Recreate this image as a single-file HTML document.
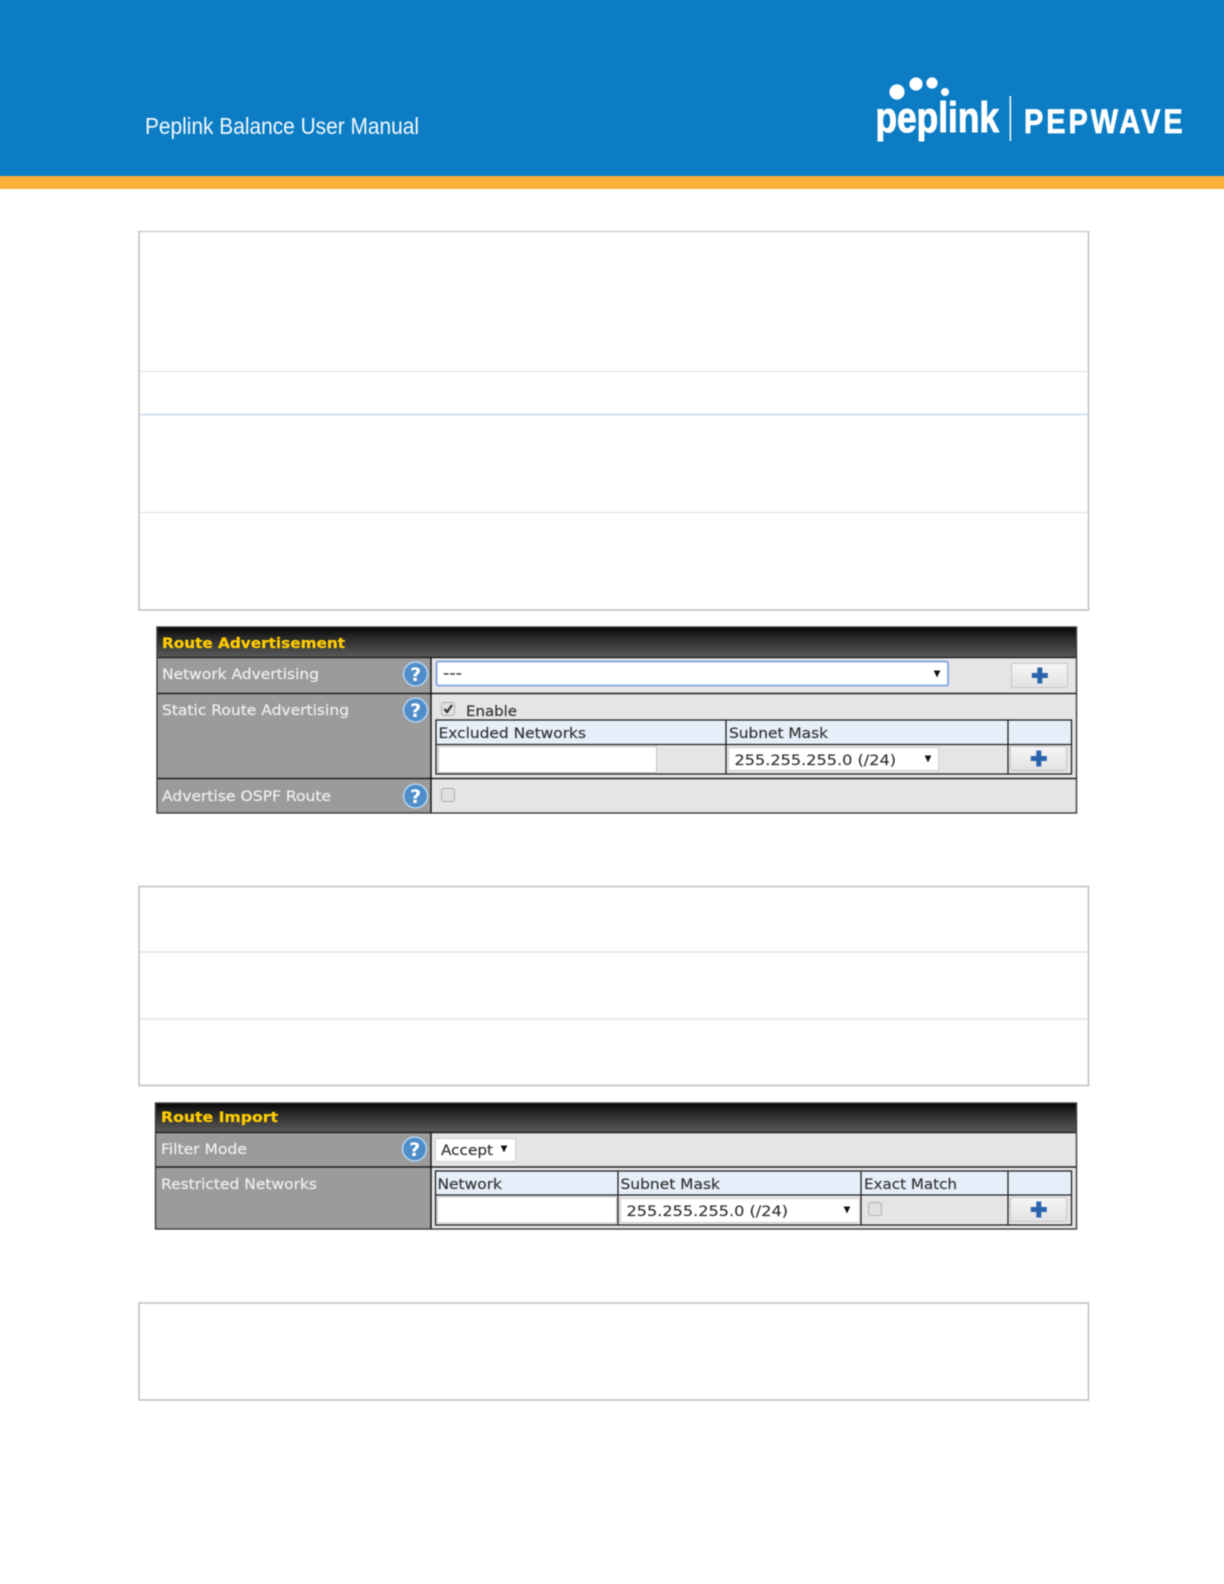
<!DOCTYPE html>
<html><head><meta charset="utf-8"><title>Peplink Balance User Manual</title>
<style>
html,body{margin:0;padding:0;background:#fff;width:1224px;height:1584px}
#w{position:relative;width:1224px;height:1584px;overflow:hidden;contain:paint}
svg{display:block;position:absolute;left:-10px;top:-10px;filter:blur(.45px)}
text{font-family:"DejaVu Sans","Liberation Sans",sans-serif;font-size:14px}
.l{fill:#eee;stroke:#eee;stroke-width:.2}
.d{fill:#333;stroke:#333;stroke-width:.15}
.t{fill:#fc0;font-weight:bold;stroke:#fc0;stroke-width:.25}
.q{fill:#fff;font-weight:bold;font-size:19px;text-anchor:middle}
</style></head><body><div id="w">
<svg width="1244" height="1604" viewBox="-10 -10 1244 1604" xmlns="http://www.w3.org/2000/svg">
<defs>
<linearGradient id="hg" x1="0" y1="0" x2="0" y2="1"><stop offset="0" stop-color="#050505"/><stop offset=".35" stop-color="#2a2a2a"/><stop offset="1" stop-color="#5e5e5e"/></linearGradient>
<pattern id="hatch" width="4" height="4" patternUnits="userSpaceOnUse"><path d="M0 4L4 0" stroke="#000" stroke-opacity=".14" stroke-width="1"/></pattern>
<linearGradient id="bg" x1="0" y1="0" x2="0" y2="1"><stop offset="0" stop-color="#f6f6f6"/><stop offset="1" stop-color="#e2e2e2"/></linearGradient>
<g id="plus"><rect x="0.5" y="0.5" width="56" height="24" rx="1.5" fill="url(#bg)" stroke="#c6c6c6"/><path d="M28.8 4.5v16M20.8 12.5h16" stroke="#2c64ab" stroke-width="5" fill="none"/></g>
<g id="help"><circle r="12" fill="#4f8dc9" stroke="#b0d2ef" stroke-width="1.6"/><text class="q" y="7">?</text></g>
<g id="cb"><rect x="0.5" y="0.5" width="13" height="13" rx="2.5" fill="#e0e0e0" stroke="#b0b0b0"/></g>
<path id="arr" d="M-3.3 -3H3.3L0 4Z" fill="#111"/>
</defs>

<!-- Banner -->
<rect x="-10" y="-10" width="1244" height="186" fill="#0c7dc4"/>
<rect x="-10" y="176" width="1244" height="13" fill="#fcaf38"/>
<text x="145" y="134" textLength="274" lengthAdjust="spacingAndGlyphs" style="font-family:'Liberation Sans',sans-serif;font-size:23px;fill:#f2f9fd">Peplink Balance User Manual</text>
<circle cx="897" cy="92" r="7.6" fill="#fff"/><circle cx="916" cy="84" r="6.6" fill="#fff"/><circle cx="932" cy="83" r="5.6" fill="#fff"/><circle cx="945" cy="92" r="4" fill="#fff"/>
<text x="875.5" y="132" textLength="123.5" lengthAdjust="spacingAndGlyphs" style="font-family:'Liberation Sans',sans-serif;font-weight:bold;font-size:43px;fill:#fff;stroke:#fff;stroke-width:1">peplink</text>
<rect x="1009.5" y="96" width="1.6" height="45" fill="#f0f7fc"/>
<text transform="translate(1024,133) scale(.85,1)" style="font-family:'Liberation Sans',sans-serif;font-weight:bold;font-size:34px;letter-spacing:3.5px;fill:#fff;stroke:#fff;stroke-width:.7">PEPWAVE</text>

<!-- Box 1 -->
<g fill="none">
<rect x="139" y="231.5" width="949.5" height="378.5" stroke="#bdbdbd" stroke-width="1.5"/>
<path d="M140 231.5H1088" stroke="#d8d8d8" stroke-width="1.6"/>
<path d="M140 371.5H1088M140 512.5H1088" stroke="#e4e4e4" stroke-width="1.2"/>
<path d="M140 414.5H1088" stroke="#ccd6ee" stroke-width="1.4"/>
<!-- Box 2 -->
<rect x="139" y="886.5" width="949.5" height="199" stroke="#bdbdbd" stroke-width="1.5"/>
<path d="M140 952H1088M140 1019H1088" stroke="#e4e4e4" stroke-width="1.4"/>
<!-- Box 3 -->
<rect x="139" y="1303" width="949.5" height="97" stroke="#bdbdbd" stroke-width="1.5"/>
</g>

<!-- Table 1 -->
<rect x="157" y="627" width="919.5" height="186" fill="#e5e5e8"/>
<rect x="157" y="658" width="274" height="155" fill="#9b9b9b"/>
<rect x="157" y="627" width="919.5" height="30" fill="url(#hg)"/>
<rect x="157" y="627" width="919.5" height="30" fill="url(#hatch)"/>
<path d="M157 657.5H1076M157 693.5H1076M157 778.5H1076" stroke="#222" stroke-width="1.4"/>
<path d="M431 657V813" stroke="#111" stroke-width="1.4"/>
<rect x="157" y="627" width="919.5" height="186" fill="none" stroke="#3c3c3c" stroke-width="1.4"/>
<text class="t" x="162" y="648" textLength="183" lengthAdjust="spacingAndGlyphs">Route Advertisement</text>
<text class="l" x="162" y="679" textLength="157" lengthAdjust="spacingAndGlyphs">Network Advertising</text>
<text class="l" x="162" y="715" textLength="187" lengthAdjust="spacingAndGlyphs">Static Route Advertising</text>
<text class="l" x="162" y="801" textLength="169" lengthAdjust="spacingAndGlyphs">Advertise OSPF Route</text>
<use href="#help" x="415.6" y="674"/><use href="#help" x="415.6" y="710"/><use href="#help" x="415.6" y="796"/>

<rect x="436.5" y="661.5" width="511.5" height="24" rx="1.5" fill="#fff" stroke="#7fa2e0" stroke-width="1.8"/>
<text class="d" x="443" y="678" textLength="19" lengthAdjust="spacingAndGlyphs">---</text>
<use href="#arr" x="937" y="673.5"/>
<use href="#plus" x="1011" y="663"/>

<use href="#cb" x="441" y="702"/>
<path d="M444.5 709l2.5 3 5-7" fill="none" stroke="#333" stroke-width="2.2"/>
<text class="d" x="466" y="716" textLength="51" lengthAdjust="spacingAndGlyphs">Enable</text>

<rect x="436" y="720" width="635.5" height="54" fill="#e5e5e8"/>
<rect x="436" y="720" width="635.5" height="24" fill="#e6eefa"/>
<rect x="436" y="720" width="635.5" height="54" fill="none" stroke="#222" stroke-width="1.3"/>
<path d="M436 744.5H1071M726 720V774M1008 720V774" stroke="#222" stroke-width="1.3"/>
<text class="d" x="438.5" y="738" textLength="147.5" lengthAdjust="spacingAndGlyphs">Excluded Networks</text>
<text class="d" x="729" y="738" textLength="99" lengthAdjust="spacingAndGlyphs">Subnet Mask</text>
<rect x="438.5" y="746.5" width="218" height="26" fill="#fff" stroke="#c4c4c4"/>
<rect x="728.5" y="747.5" width="210" height="23" rx="1" fill="#fff" stroke="#d0d0d0"/>
<text class="d" x="734.5" y="765" textLength="161.5" lengthAdjust="spacingAndGlyphs">255.255.255.0 (/24)</text>
<use href="#arr" x="928" y="758.5"/>
<use href="#plus" x="1010" y="746"/>
<use href="#cb" x="441" y="788"/>

<!-- Table 2 -->
<rect x="155.5" y="1103" width="921" height="126" fill="#e5e5e8"/>
<rect x="155.5" y="1133" width="275.5" height="96" fill="#9b9b9b"/>
<rect x="155.5" y="1103" width="921" height="29" fill="url(#hg)"/>
<rect x="155.5" y="1103" width="921" height="29" fill="url(#hatch)"/>
<path d="M155 1132.5H1076M155 1167H1076" stroke="#222" stroke-width="1.4"/>
<path d="M431 1132V1229" stroke="#111" stroke-width="1.4"/>
<rect x="155.5" y="1103" width="921" height="126" fill="none" stroke="#3c3c3c" stroke-width="1.4"/>
<text class="t" x="161" y="1122" textLength="117" lengthAdjust="spacingAndGlyphs">Route Import</text>
<text class="l" x="161" y="1154" textLength="86" lengthAdjust="spacingAndGlyphs">Filter Mode</text>
<text class="l" x="161" y="1189" textLength="156" lengthAdjust="spacingAndGlyphs">Restricted Networks</text>
<use href="#help" x="414.6" y="1149"/>

<rect x="435.5" y="1138.5" width="80" height="23" rx="1" fill="#fff" stroke="#d0d0d0"/>
<text class="d" x="441" y="1155" textLength="52" lengthAdjust="spacingAndGlyphs">Accept</text>
<use href="#arr" x="504" y="1148.5"/>

<rect x="435.5" y="1171" width="636" height="54" fill="#e5e5e8"/>
<rect x="435.5" y="1171" width="636" height="24" fill="#e6eefa"/>
<rect x="435.5" y="1171" width="636" height="54" fill="none" stroke="#222" stroke-width="1.3"/>
<path d="M435 1195H1071M618 1171V1225M861 1171V1225M1008 1171V1225" stroke="#222" stroke-width="1.3"/>
<text class="d" x="437.5" y="1189" textLength="64.5" lengthAdjust="spacingAndGlyphs">Network</text>
<text class="d" x="620.5" y="1189" textLength="99.5" lengthAdjust="spacingAndGlyphs">Subnet Mask</text>
<text class="d" x="864" y="1189" textLength="93" lengthAdjust="spacingAndGlyphs">Exact Match</text>
<rect x="437.5" y="1197" width="179" height="26" fill="#fff" stroke="#c8c8c8"/>
<rect x="620.5" y="1198.5" width="239" height="24" rx="1" fill="#fff" stroke="#d0d0d0"/>
<text class="d" x="626.5" y="1216" textLength="161.5" lengthAdjust="spacingAndGlyphs">255.255.255.0 (/24)</text>
<use href="#arr" x="847" y="1209.5"/>
<use href="#cb" x="868" y="1202"/>
<use href="#plus" x="1010" y="1197"/>
</svg>
</div></body></html>
